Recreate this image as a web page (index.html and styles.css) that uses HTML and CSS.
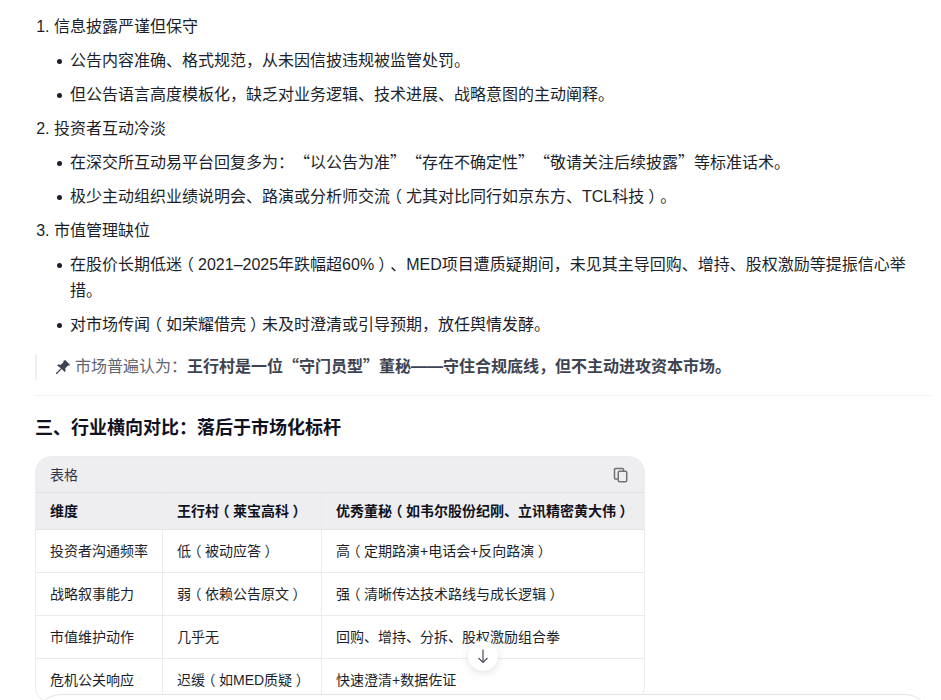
FILE: index.html
```html
<!DOCTYPE html>
<html lang="zh-CN">
<head>
<meta charset="utf-8">
<title>行业横向对比</title>
<link rel="stylesheet" href="styles.css">
</head>
<body>
<main class="content">
  <ol class="steps">
    <li>信息披露严谨但保守
      <ul>
        <li>公告内容准确、格式规范<span class="mid">，</span>从未因信披违规被监管处罚。</li>
        <li>但公告语言高度模板化<span class="mid">，</span>缺乏对业务逻辑、技术进展、战略意图的主动阐释。</li>
      </ul>
    </li>
    <li>投资者互动冷淡
      <ul>
        <li>在深交所互动易平台回复多为<span class="mid">：</span><span class="cjk">“以公告为准”“存在不确定性”“敬请关注后续披露”</span>等标准话术。</li>
        <li>极少主动组织业绩说明会、路演或分析师交流<span class="br">（</span>尤其对比同行如京东方、TCL科技<span class="br">）</span>。</li>
      </ul>
    </li>
    <li>市值管理缺位
      <ul>
        <li>在股价长期低迷<span class="br">（</span>2021–2025年跌幅超60%<span class="br">）</span>、MED项目遭质疑期间<span class="mid">，</span>未见其主导回购、增持、股权激励等提振信心举措。</li>
        <li>对市场传闻<span class="br">（</span>如荣耀借壳<span class="br">）</span>未及时澄清或引导预期<span class="mid">，</span>放任舆情发酵。</li>
      </ul>
    </li>
  </ol>
  <blockquote class="note">
    <svg class="pin" viewBox="0 0 16 16" width="16" height="16" aria-hidden="true"><path d="M10.2 1 15 5.8l-1 .9-.9-.3-2.8 2.8.3 2.7-1 1-2.8-2.8L2 15l-1 0 0-1 4.900-4.800L2.100 6.400l1-1 2.700.3 2.800-2.800-.3-.9z" fill="#3d4350"/></svg>
    <span>市场普遍认为<span class="mid">：</span><strong>王行村是一位<span class="cjk">“守门员型”</span>董秘——守住合规底线<span class="mid">，</span>但不主动进攻资本市场。</strong></span>
  </blockquote>
  <hr class="rule">
  <h2 class="heading">三、行业横向对比<span class="mid">：</span>落后于市场化标杆</h2>
  <section class="card">
    <div class="card-bar">
      <span>表格</span>
      <svg class="copy" viewBox="0 0 16 16" width="16" height="16" aria-hidden="true"><path d="M10.500 4V2.600A1.100 1.100 0 0 0 9.400 1.500H2.600A1.100 1.100 0 0 0 1.500 2.600v8.300A1.100 1.100 0 0 0 2.600 12H5" fill="none" stroke="#707276" stroke-width="1.500"/><rect x="5.250" y="4.250" width="8.500" height="10.500" rx="1.300" fill="none" stroke="#707276" stroke-width="1.500"/></svg>
    </div>
    <table class="grid">
      <thead>
        <tr><th class="c1">维度</th><th class="c2">王行村<span class="br">（</span>莱宝高科<span class="br">）</span></th><th>优秀董秘<span class="br">（</span>如韦尔股份纪刚、立讯精密黄大伟<span class="br">）</span></th></tr>
      </thead>
      <tbody>
        <tr><td>投资者沟通频率</td><td>低<span class="br">（</span>被动应答<span class="br">）</span></td><td>高<span class="br">（</span>定期路演+电话会+反向路演<span class="br">）</span></td></tr>
        <tr><td>战略叙事能力</td><td>弱<span class="br">（</span>依赖公告原文<span class="br">）</span></td><td>强<span class="br">（</span>清晰传达技术路线与成长逻辑<span class="br">）</span></td></tr>
        <tr><td>市值维护动作</td><td>几乎无</td><td>回购、增持、分拆、股权激励组合拳</td></tr>
        <tr><td>危机公关响应</td><td>迟缓<span class="br">（</span>如MED质疑<span class="br">）</span></td><td>快速澄清+数据佐证</td></tr>
      </tbody>
    </table>
  </section>
</main>
<button class="scroll-down" type="button" aria-label="滚动到底部">
  <svg viewBox="0 0 16 16" width="16" height="16" aria-hidden="true"><path d="M8 1.500v13M3.500 10 8 14.500l4.500-4.500" fill="none" stroke="#4b4f5a" stroke-width="1.200"/></svg>
</button>
<div class="composer"></div>
</body>
</html>
```

FILE: styles.css
```css
html, body {
  margin: 0;
  height: 700px;
  overflow: hidden;
  background: #fff;
}
body {
  font-family: "Liberation Sans", "Noto Sans CJK SC", sans-serif;
  color: #1c1f2b;
  position: relative;
  text-spacing-trim: space-all;
}
.cjk {
  font-family: "Noto Sans CJK SC", sans-serif;
  line-height: 0;
}
.mid {
  font-family: "Noto Sans CJK TC", sans-serif;
  line-height: 0;
}
.br {
  font-feature-settings: "halt";
  padding: 0 0.25em;
}
.content {
  width: 896px;
  margin-left: 35px;
  padding-top: 14px;
  font-size: 16px;
  line-height: 26px;
}
.steps {
  margin: 0;
  padding-left: 19px;
}
.steps > li {
  margin-bottom: 8px;
}
.steps ul {
  margin: 8px 0 0;
  padding-left: 16px;
  list-style: none;
}
.steps ul li {
  margin-bottom: 8px;
  position: relative;
}
.steps ul li::before {
  content: "";
  position: absolute;
  left: -13px;
  top: 11px;
  width: 5px;
  height: 5px;
  border-radius: 50%;
  background: #1c1f2b;
}
.steps ul li:last-child {
  margin-bottom: 0;
}
.note {
  margin: 16px 0 0;
  padding-left: 18px;
  border-left: 2px solid #f0f0f2;
  color: #5f6470;
  display: flex;
  align-items: center;
  gap: 4px;
}
.note strong {
  color: #3d4350;
  font-weight: 700;
}
.pin {
  flex: none;
}
.rule {
  border: 0;
  border-top: 1px solid #f0f0f2;
  margin: 15px 0 0;
}
.heading {
  margin: 19px 0 15px;
  font-size: 18px;
  line-height: 26px;
  font-weight: 700;
  color: #10121f;
}
.card {
  width: 610px;
  border: 1px solid #ebebed;
  border-radius: 16px;
  overflow: hidden;
  box-sizing: border-box;
}
.card-bar {
  height: 35px;
  background: #eeeef0;
  display: flex;
  justify-content: space-between;
  align-items: center;
  padding: 0 15px 0 14px;
  font-size: 14px;
  color: #34374a;
}
.copy {
  flex: none;
}
.grid {
  width: 100%;
  border-collapse: collapse;
  font-size: 14px;
  line-height: 22px;
  table-layout: fixed;
}
.grid th, .grid td {
  text-align: left;
  padding: 10px 14px;
  border: 1px solid #ebebed;
  border-left: 0;
  height: 22px;
}
.grid th:last-child, .grid td:last-child {
  border-right: 0;
}
.grid th {
  background: #eeeef0;
  font-weight: 700;
  padding: 7px 14px;
  border-top: 1px solid #e2e2e5;
  border-bottom: 1px solid #e2e2e5;
  color: #10121f;
}
.grid .c1 { width: 98px; }
.grid .c2 { width: 130px; }
.scroll-down {
  position: absolute;
  left: 468px;
  top: 641px;
  width: 30px;
  height: 30px;
  padding: 0;
  border: 0;
  border-radius: 50%;
  background: #fff;
  box-shadow: 0 2px 8px rgba(0, 0, 0, 0.12);
  display: flex;
  align-items: center;
  justify-content: center;
}
.composer {
  position: absolute;
  left: 35px;
  top: 694px;
  width: 896px;
  height: 60px;
  box-sizing: border-box;
  background: #fff;
  border: 1px solid #e4e4e7;
  border-radius: 26px;
}
```
